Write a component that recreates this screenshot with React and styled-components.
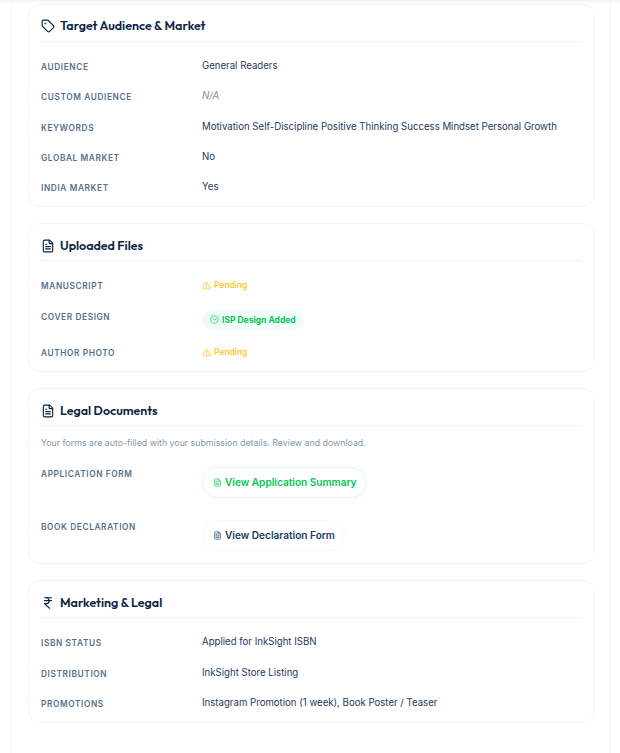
import React from 'react';
import styled, { createGlobalStyle } from 'styled-components';
import { Tag, FileText, TriangleAlert, CircleCheckBig, IndianRupee } from 'lucide-react';

const GlobalStyle = createGlobalStyle`
  html, body {
    margin: 0;
    padding: 0;
    background: #fff;
    font-family: "Inter", "Liberation Sans", sans-serif;
  }
`;

const Page = styled.div`
  width: 620px;
  height: 753px;
  overflow: hidden;
  box-sizing: border-box;
  padding: 0 9px 0 11px;
  background: linear-gradient(#f1f4f6, #fff 4px);
`;

const Panel = styled.main`
  box-sizing: border-box;
  height: 100%;
  padding: 4px 15px 0 16px;
  border-left: 1px solid #f0f8fc;
  border-right: 1px solid #f0f8fc;
  display: flex;
  flex-direction: column;
  gap: 16px;
`;

const Card = styled.section`
  border: 1px solid #f0f8fc;
  border-radius: 12px;
  padding: 11.25px 12px 3px 12px;
  background: #fff;
`;

const CardTitle = styled.h3`
  display: flex;
  align-items: center;
  gap: 5px;
  margin: 0 0 10px;
  padding-bottom: 4.75px;
  border-bottom: 1px solid #eef4f7;
  font-family: "Outfit", "Lato", "Inter", sans-serif;
  font-size: 12.48px;
  font-weight: 600;
  line-height: 20px;
  color: #0b2545;
  svg { flex: none; }
`;

const Row = styled.div`
  display: grid;
  grid-template-columns: 161px 1fr;
  height: ${p => p.$h || 30.25}px;
  align-items: start;
`;

const Label = styled.div`
  font-size: 8.32px;
  font-weight: 600;
  letter-spacing: 0.6px;
  line-height: 30.5px;
  color: #56718c;
  text-transform: uppercase;
`;

const Value = styled.div`
  font-size: 9.64px;
  line-height: 28.5px;
  color: ${p => (p.$muted ? '#7c8fa3' : '#1b3a5c')};
  font-style: ${p => (p.$muted ? 'italic' : 'normal')};
`;

const Pending = styled.span`
  display: inline-flex;
  align-items: center;
  gap: 3px;
  font-size: 8.5px;
  font-weight: 500;
  color: #ffc107;
`;

const Badge = styled.span`
  display: inline-flex;
  align-items: center;
  gap: 3px;
  height: 20px;
  margin-top: 8px;
  padding: 0 8px;
  border-radius: 10px;
  background: #effdf8;
  color: #00c853;
  font-size: 8.5px;
  font-weight: 700;
  line-height: 20px;
`;

const Note = styled.p`
  margin: 0 0 9px;
  font-size: 8.8px;
  line-height: 14px;
  color: #8597a9;
`;

const LinkButton = styled.span`
  display: inline-flex;
  align-items: center;
  gap: 3px;
  height: 30.5px;
  box-sizing: border-box;
  margin-top: 8px;
  padding: 0 9px 0 10px;
  border-radius: 16px;
  border: 1px solid ${p => (p.$active ? '#d9f9ec' : '#f1fafc')};
  color: ${p => (p.$active ? '#00c853' : '#1a3d63')};
  font-size: 10.08px;
  font-weight: 600;
  line-height: 1;
  svg {
    opacity: 0.7;
    fill: currentColor;
    fill-opacity: 0.25;
  }
`;

const App = () => (
  <>
    <GlobalStyle />
    <Page>
      <Panel>
        <Card>
          <CardTitle><Tag size={14} />Target Audience &amp; Market</CardTitle>
          <Row><Label>Audience</Label><Value>General Readers</Value></Row>
          <Row><Label>Custom Audience</Label><Value $muted>N/A</Value></Row>
          <Row><Label>Keywords</Label><Value>Motivation Self-Discipline Positive Thinking Success Mindset Personal Growth</Value></Row>
          <Row><Label>Global Market</Label><Value>No</Value></Row>
          <Row><Label>India Market</Label><Value>Yes</Value></Row>
        </Card>
        <Card>
          <CardTitle><FileText size={14} />Uploaded Files</CardTitle>
          <Row><Label>Manuscript</Label><Value><Pending><TriangleAlert size={9} />Pending</Pending></Value></Row>
          <Row $h={36.5}><Label>Cover Design</Label><Value><Badge><CircleCheckBig size={9} />ISP Design Added</Badge></Value></Row>
          <Row><Label>Author Photo</Label><Value><Pending><TriangleAlert size={9} />Pending</Pending></Value></Row>
        </Card>
        <Card>
          <CardTitle><FileText size={14} />Legal Documents</CardTitle>
          <Note>Your forms are auto-filled with your submission details. Review and download.</Note>
          <Row $h={52.75}><Label>Application Form</Label><Value><LinkButton $active><FileText size={9} />View Application Summary</LinkButton></Value></Row>
          <Row $h={48.25}><Label>Book Declaration</Label><Value><LinkButton><FileText size={9} />View Declaration Form</LinkButton></Value></Row>
        </Card>
        <Card>
          <CardTitle><IndianRupee size={14} />Marketing &amp; Legal</CardTitle>
          <Row><Label>ISBN Status</Label><Value>Applied for InkSight ISBN</Value></Row>
          <Row><Label>Distribution</Label><Value>InkSight Store Listing</Value></Row>
          <Row><Label>Promotions</Label><Value>Instagram Promotion (1 week), Book Poster / Teaser</Value></Row>
        </Card>
      </Panel>
    </Page>
  </>
);

export default App;
